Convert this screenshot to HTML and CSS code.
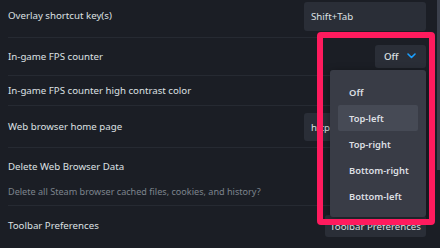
FILE: index.html
```html
<!DOCTYPE html>
<html>
<head>
<meta charset="utf-8">
<link rel="stylesheet" href="styles.css">
</head>
<body>
<div class="page">
  <div class="settings">
    <div class="row row-first">
      <div class="label">Overlay shortcut key(s)</div>
      <div class="field field-wide">Shift+Tab</div>
    </div>
    <div class="row row-fps">
      <div class="label">In-game FPS counter</div>
      <div class="select">
        <div class="select-btn">
          <span>Off</span>
          <svg class="chev" width="9" height="6" viewBox="0 0 9 6"><path d="M1 1 L4.5 4.5 L8 1" fill="none" stroke="#1a9fff" stroke-width="1.6" stroke-linecap="round" stroke-linejoin="round"/></svg>
        </div>
        <div class="menu">
          <div class="item">Off</div>
          <div class="item item-active">Top-left</div>
          <div class="item">Top-right</div>
          <div class="item">Bottom-right</div>
          <div class="item">Bottom-left</div>
        </div>
        <div class="highlight"></div>
      </div>
    </div>
    <div class="row row-contrast">
      <div class="label">In-game FPS counter high contrast color</div>
    </div>
    <div class="row row-home">
      <div class="label">Web browser home page</div>
      <div class="field field-wide field-tall">http://store.steampowered.com</div>
    </div>
    <div class="row row-delete">
      <div class="block">
        <div class="label">Delete Web Browser Data</div>
        <div class="desc">Delete all Steam browser cached files, cookies, and history?</div>
      </div>
    </div>
    <div class="row row-toolbar">
      <div class="label">Toolbar Preferences</div>
      <div class="btn btn-toolbar">Toolbar Preferences</div>
    </div>
  </div>
  <div class="scrollbar"></div>
</div>
</body>
</html>
```
FILE: styles.css
```css
html, body {
  margin: 0;
  padding: 0;
  background: #1b1e25;
  overflow: hidden;
}
body {
  width: 440px;
  height: 248px;
  font-family: "Noto Sans", "Open Sans", sans-serif;
  color: #dde0e3;
}
.page {
  display: flex;
  align-items: flex-start;
  height: 248px;
}
.settings {
  flex: 1;
  padding: 0 11px 0 8px;
  margin-top: -5px;
}
.scrollbar {
  width: 3px;
  height: 170px;
  background: #3b404c;
}
.row {
  display: flex;
  align-items: center;
  justify-content: space-between;
  border-bottom: 1px solid #262a32;
  box-sizing: border-box;
}
.row-first { height: 43px; }
.row-fps { height: 38px; }
.row-contrast { height: 30px; padding-top: 1px; }
.row-home { height: 42px; }
.row-delete { height: 58px; align-items: flex-start; }
.row-toolbar { height: 42px; border-bottom: none; padding-bottom: 2px; }
.label {
  font-size: 9.7px;
  line-height: 14px;
  color: #dde0e3;
  white-space: nowrap;
}
.block { padding-top: 12px; }
.desc {
  margin-top: 12px;
  font-size: 9.1px;
  line-height: 12px;
  color: #7d848d;
  white-space: nowrap;
}
.field {
  background: #2a2e37;
  border-radius: 3px;
  font-size: 9.7px;
  color: #dde0e3;
  box-sizing: border-box;
  display: flex;
  align-items: center;
  padding-left: 7px;
  white-space: nowrap;
  overflow: hidden;
}
.field-wide { width: 122px; height: 29px; margin-top: 1px; }
.field-tall { height: 28px; }
.select { position: relative; }
.select-btn {
  width: 51px;
  height: 23px;
  box-sizing: border-box;
  background: #2a2e37;
  border-radius: 3px;
  display: flex;
  align-items: center;
  padding-left: 9px;
  gap: 8px;
  font-size: 9.7px;
  font-weight: 500;
  color: #dde0e3;
}
.chev { display: block; margin-top: -2px; }
.menu {
  position: absolute;
  top: 25px;
  right: 0;
  width: 96px;
  box-sizing: border-box;
  padding: 9px 8px 8px;
  background: #393c46;
  border-radius: 3px;
  z-index: 5;
  box-shadow: 0 2px 8px rgba(0,0,0,0.4);
}
.item {
  height: 26px;
  display: flex;
  align-items: center;
  padding-left: 11px;
  font-size: 9.4px;
  font-weight: 600;
  color: #dcdfe2;
  border-radius: 2px;
}
.item-active { background: #464a55; }
.highlight {
  position: absolute;
  left: -58px;
  top: -13px;
  width: 118px;
  height: 193px;
  box-sizing: border-box;
  border: 6px solid #ff1b5e;
  border-radius: 4px;
  z-index: 6;
  pointer-events: none;
}
.btn {
  background: #2a2e37;
  border-radius: 3px;
  font-size: 9.7px;
  color: #dde0e3;
  display: flex;
  align-items: center;
  justify-content: center;
  box-sizing: border-box;
  white-space: nowrap;
}
.btn-toolbar { width: 101px; height: 22px; }
```
